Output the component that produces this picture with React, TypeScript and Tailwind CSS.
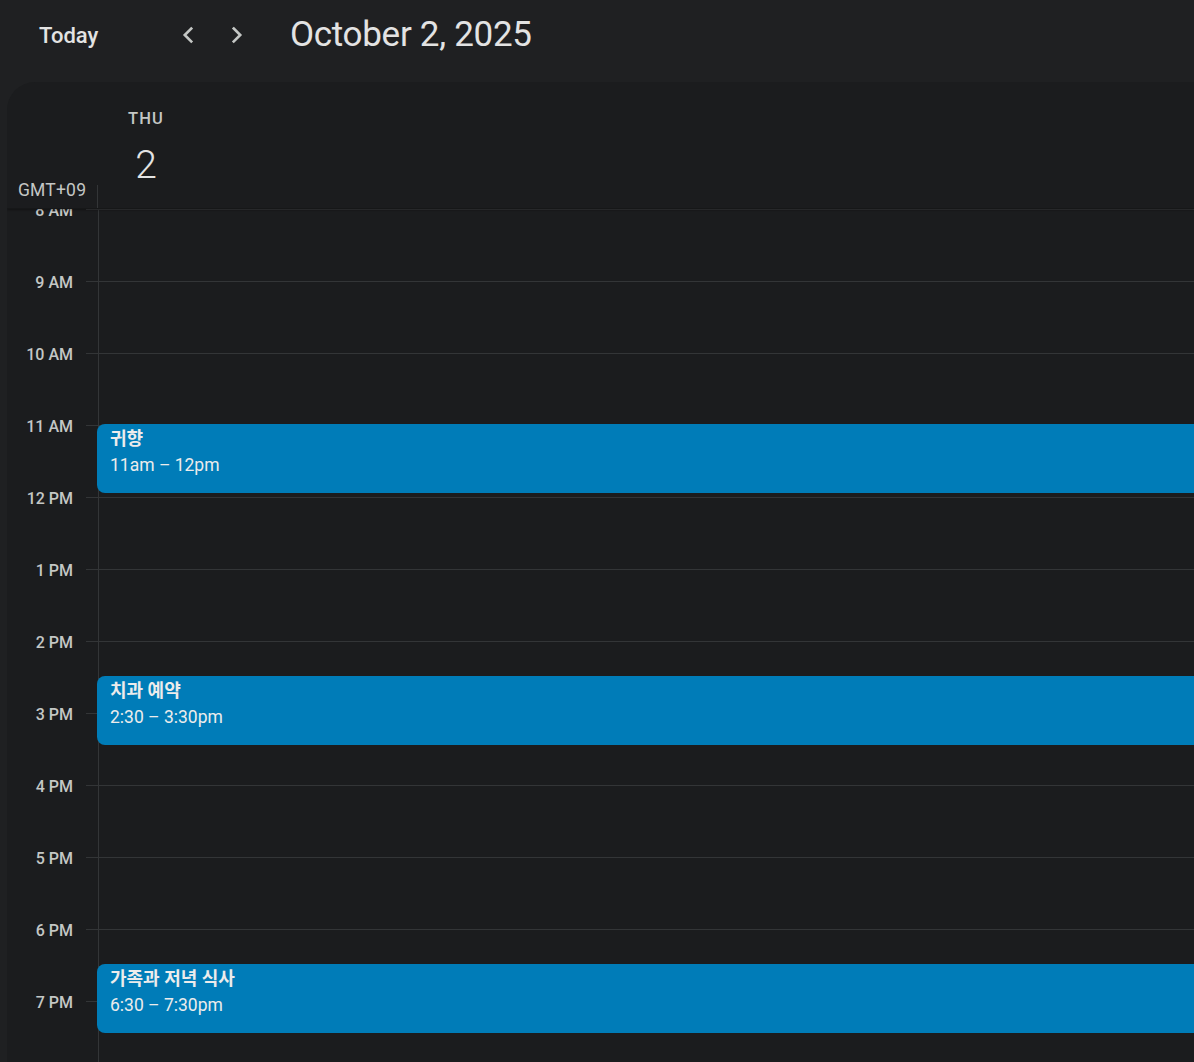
import React from 'react';

const hours = ['8 AM', '9 AM', '10 AM', '11 AM', '12 PM', '1 PM', '2 PM', '3 PM', '4 PM', '5 PM', '6 PM', '7 PM'];

interface CalEvent {
  title: string;
  time: string;
  start: number; // hours after 8 AM
}

const events: CalEvent[] = [
  { title: '귀향', time: '11am – 12pm', start: 3 },
  { title: '치과 예약', time: '2:30 – 3:30pm', start: 6.5 },
  { title: '가족과 저녁 식사', time: '6:30 – 7:30pm', start: 10.5 },
];

const HOUR = 72;

const Chevron: React.FC<{ dir: 'left' | 'right' }> = ({ dir }) => (
  <svg width="26" height="26" viewBox="0 0 24 24" fill="none">
    <path
      d={dir === 'left' ? 'M15 6l-6 6 6 6' : 'M9 6l6 6-6 6'}
      stroke="#c4c7c5"
      strokeWidth="2.4"
      strokeLinecap="square"
    />
  </svg>
);

export default function App() {
  return (
    <div
      className="w-full h-[1062px] overflow-hidden bg-[#1f2022] flex flex-col"
      style={{ fontFamily: 'Roboto, "Noto Sans CJK KR", sans-serif' }}
    >
      {/* top bar */}
      <div className="h-[82px] shrink-0 flex items-center pb-[12px]">
        <div className="ml-[39px] w-[60px] text-[22px] font-medium text-[#e3e3e3]">Today</div>
        <div className="ml-[65px] flex items-center gap-[1px]">
          <button className="w-[48px] h-[48px] flex items-center justify-center">
            <Chevron dir="left" />
          </button>
          <button className="w-[48px] h-[48px] flex items-center justify-center">
            <Chevron dir="right" />
          </button>
        </div>
        <div className="ml-[29px] text-[35px] text-[#e3e3e3] tracking-[-0.3px]">October 2, 2025</div>
      </div>

      {/* main panel */}
      <div className="ml-[7px] flex-1 bg-[#1b1c1e] rounded-tl-[28px] flex flex-col overflow-hidden">
        {/* day header */}
        <div className="h-[127px] shrink-0 flex border-b border-[#161718] shadow-[0_1px_2px_rgba(0,0,0,0.35)] relative z-10">
          <div className="w-[91px] shrink-0 flex flex-col justify-end">
            <div className="text-[17.5px] text-[#c4c7c5] pl-[11px] pb-[5px] tracking-[0.2px]">GMT+09</div>
          </div>
          <div className="flex flex-col">
            <div className="flex-1 flex">
              <div className="w-[96px] flex flex-col items-center pt-[25px]">
                <div className="text-[16.5px] font-medium text-[#c4c7c5] tracking-[1.2px]">THU</div>
                <div className="text-[39px] font-light text-[#e3e3e3] leading-none mt-[14px]">2</div>
              </div>
            </div>
            <div className="h-[30px] border-l border-[#333537] -ml-px" />
          </div>
        </div>

        {/* hour grid */}
        <div className="flex-1 overflow-hidden relative">
          <div className="relative">
            {hours.map((h) => (
              <div key={h} className="flex h-[72px]">
                <div className="w-[91px] shrink-0 flex">
                  <div className="flex-1 text-right pr-[13px] -mt-[8px] text-[16px] font-medium text-[#c4c7c5] leading-[20px]">
                    {h}
                  </div>
                  <div className="w-[12px] border-t border-[#333537]" />
                </div>
                <div className="flex-1 border-t border-l border-[#333537]" />
              </div>
            ))}
            {events.map((e) => (
              <div
                key={e.title}
                className="absolute left-[90px] right-[-20px] h-[69px] rounded-[8px] bg-[#007cb8] pl-[13px] pt-[3px]"
                style={{ top: e.start * HOUR - 1 }}
              >
                <div className="text-[18px] font-bold text-[#ececec] leading-[24px]">{e.title}</div>
                <div className="text-[17.5px] text-[#ececec] leading-[24px] mt-[2px]">{e.time}</div>
              </div>
            ))}
          </div>
        </div>
      </div>
    </div>
  );
}
